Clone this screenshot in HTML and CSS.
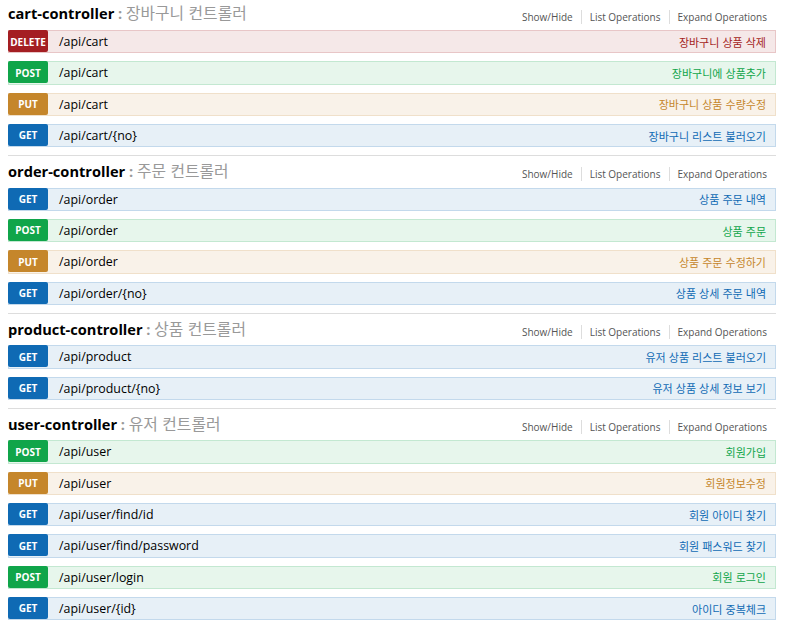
FILE: index.html
```html
<!DOCTYPE html>
<html lang="ko">
<head>
<meta charset="utf-8">
<title>Swagger</title>
<link rel="stylesheet" href="styles.css">
</head>
<body>
<div class="wrap">
  <section class="resource first">
    <div class="res-head">
      <h2><span class="name">cart-controller</span> : <span class="desc">장바구니 컨트롤러</span></h2>
      <ul class="options"><li>Show/Hide</li><li>List Operations</li><li>Expand Operations</li></ul>
    </div>
    <ul class="ops">
      <li class="op delete"><span class="method">DELETE</span><span class="path">/api/cart</span><span class="summary">장바구니 상품 삭제</span></li>
      <li class="op post"><span class="method">POST</span><span class="path">/api/cart</span><span class="summary">장바구니에 상품추가</span></li>
      <li class="op put"><span class="method">PUT</span><span class="path">/api/cart</span><span class="summary">장바구니 상품 수량수정</span></li>
      <li class="op get"><span class="method">GET</span><span class="path">/api/cart/{no}</span><span class="summary">장바구니 리스트 불러오기</span></li>
    </ul>
  </section>
  <section class="resource">
    <div class="res-head">
      <h2><span class="name">order-controller</span> : <span class="desc">주문 컨트롤러</span></h2>
      <ul class="options"><li>Show/Hide</li><li>List Operations</li><li>Expand Operations</li></ul>
    </div>
    <ul class="ops">
      <li class="op get"><span class="method">GET</span><span class="path">/api/order</span><span class="summary">상품 주문 내역</span></li>
      <li class="op post"><span class="method">POST</span><span class="path">/api/order</span><span class="summary">상품 주문</span></li>
      <li class="op put"><span class="method">PUT</span><span class="path">/api/order</span><span class="summary">상품 주문 수정하기</span></li>
      <li class="op get"><span class="method">GET</span><span class="path">/api/order/{no}</span><span class="summary">상품 상세 주문 내역</span></li>
    </ul>
  </section>
  <section class="resource">
    <div class="res-head">
      <h2><span class="name">product-controller</span> : <span class="desc">상품 컨트롤러</span></h2>
      <ul class="options"><li>Show/Hide</li><li>List Operations</li><li>Expand Operations</li></ul>
    </div>
    <ul class="ops">
      <li class="op get"><span class="method">GET</span><span class="path">/api/product</span><span class="summary">유저 상품 리스트 불러오기</span></li>
      <li class="op get"><span class="method">GET</span><span class="path">/api/product/{no}</span><span class="summary">유저 상품 상세 정보 보기</span></li>
    </ul>
  </section>
  <section class="resource">
    <div class="res-head">
      <h2><span class="name">user-controller</span> : <span class="desc">유저 컨트롤러</span></h2>
      <ul class="options"><li>Show/Hide</li><li>List Operations</li><li>Expand Operations</li></ul>
    </div>
    <ul class="ops">
      <li class="op post"><span class="method">POST</span><span class="path">/api/user</span><span class="summary">회원가입</span></li>
      <li class="op put"><span class="method">PUT</span><span class="path">/api/user</span><span class="summary">회원정보수정</span></li>
      <li class="op get"><span class="method">GET</span><span class="path">/api/user/find/id</span><span class="summary">회원 아이디 찾기</span></li>
      <li class="op get"><span class="method">GET</span><span class="path">/api/user/find/password</span><span class="summary">회원 패스워드 찾기</span></li>
      <li class="op post"><span class="method">POST</span><span class="path">/api/user/login</span><span class="summary">회원 로그인</span></li>
      <li class="op get"><span class="method">GET</span><span class="path">/api/user/{id}</span><span class="summary">아이디 중복체크</span></li>
    </ul>
  </section>
</div>
</body>
</html>
```
FILE: styles.css
```css
* { box-sizing: border-box; }
html, body { margin: 0; padding: 0; background: #fff; }
body {
  font-family: "Open Sans", "Noto Sans CJK KR", sans-serif;
  color: #000;
  overflow: hidden;
}
.wrap {
  width: 768px;
  margin-left: 8px;
}
.resource {
  border-bottom: 1px solid #ddd;
}
.resource.first { margin-top: -1.33px; }
.res-head {
  height: 31.33px;
  display: flex;
  align-items: center;
  justify-content: space-between;
}
.res-head h2 {
  margin: 0;
  padding-bottom: 2px;
  font-size: 14.6px;
  font-weight: bold;
  color: #999;
  line-height: 20px;
  white-space: nowrap;
}
.res-head .name { color: #000; }
.res-head .desc {
  font-size: 15.8px;
  font-weight: normal;
  font-family: "Noto Sans CJK KR", "Open Sans", sans-serif;
}
.options {
  list-style: none;
  margin: 0;
  padding: 5px 9px 0 0;
  display: flex;
}
.options li {
  font-size: 10px;
  color: #555;
  padding: 0 8px;
  line-height: 14px;
  border-right: 1px solid #ddd;
}
.options li:first-child { padding-left: 0; }
.options li:last-child { padding-right: 0; border-right: none; }
.ops {
  list-style: none;
  margin: 0;
  padding: 0;
}
.op {
  height: 23.33px;
  margin-bottom: 8px;
  border: 1px solid;
  display: flex;
  align-items: center;
  position: relative;
}
.method {
  width: 40px;
  height: 22px;
  margin: -1px 0 0 -1px;
  align-self: flex-start;
  border-radius: 2px;
  color: #fff;
  font-size: 10px;
  font-weight: bold;
  display: flex;
  align-items: center;
  justify-content: center;
  padding-top: 1px;
}
.path {
  padding-left: 11px;
  font-size: 12.4px;
  color: #000;
  flex: 1;
}
.summary {
  padding-right: 9px;
  font-size: 11px;
  font-family: "Noto Sans CJK KR", "Open Sans", sans-serif;
}
.op.delete { background: #f5e8e8; border-color: #e8c6c7; }
.op.delete .method { background: #a41e22; }
.op.delete .summary { color: #a41e22; }
.op.post { background: #e7f6ec; border-color: #c3e8d1; }
.op.post .method { background: #10a54a; }
.op.post .summary { color: #10a54a; }
.op.put { background: #f9f2e9; border-color: #f0e0ca; }
.op.put .method { background: #c5862b; }
.op.put .summary { color: #c5862b; }
.op.get { background: #e7f0f7; border-color: #c3d9ec; }
.op.get .method { background: #0f6ab4; }
.op.get .summary { color: #0f6ab4; }
```
